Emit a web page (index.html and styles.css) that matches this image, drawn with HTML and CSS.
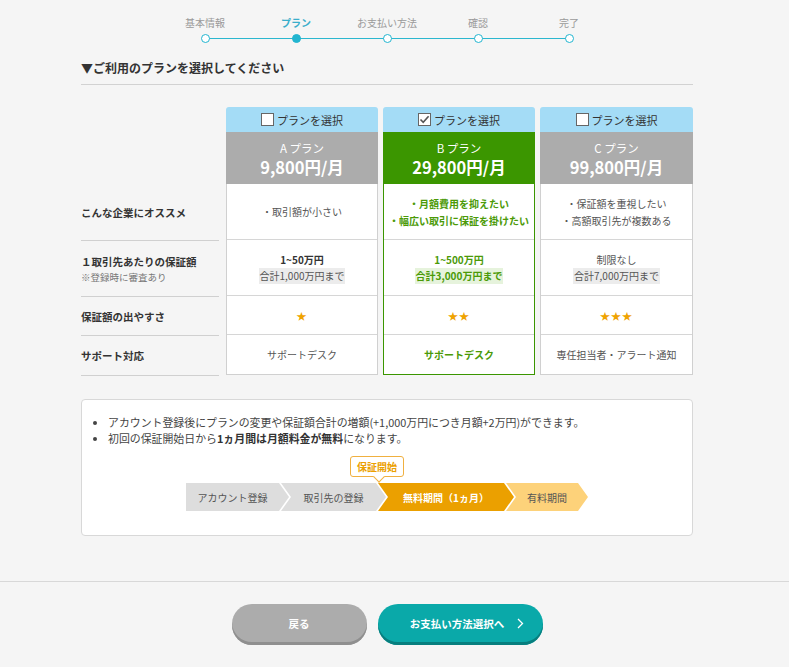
FILE: index.html
```html
<!DOCTYPE html>
<html lang="ja">
<head>
<meta charset="utf-8">
<title>プラン選択</title>
<link rel="stylesheet" href="styles.css">
</head>
<body>
<div class="frame">
  <div class="wrap">
    <ol class="stepper">
      <li class="step"><span class="step-label">基本情報</span><span class="dot"></span></li>
      <li class="step active"><span class="step-label">プラン</span><span class="dot"></span></li>
      <li class="step"><span class="step-label">お支払い方法</span><span class="dot"></span></li>
      <li class="step"><span class="step-label">確認</span><span class="dot"></span></li>
      <li class="step"><span class="step-label">完了</span><span class="dot"></span></li>
    </ol>

    <h2 class="heading">▼ご利用のプランを選択してください</h2>

    <div class="plans">
      <div class="labels">
        <div class="labels-head"></div>
        <div class="lrow r1"><span class="lt">こんな企業にオススメ</span></div>
        <div class="lrow r2"><span class="lt">１取引先あたりの保証額</span><span class="ln">※登録時に審査あり</span></div>
        <div class="lrow r3"><span class="lt">保証額の出やすさ</span></div>
        <div class="lrow r4"><span class="lt">サポート対応</span></div>
      </div>

      <div class="plan">
        <div class="plan-select"><span class="cb"></span>プランを選択</div>
        <div class="plan-price"><span class="pname">A プラン</span><span class="pval">9,800円/月</span></div>
        <div class="plan-body">
          <div class="cell r1">・取引額が小さい</div>
          <div class="cell r2"><b class="amt">1~50万円</b><span class="total">合計1,000万円まで</span></div>
          <div class="cell r3"><span class="stars">★</span></div>
          <div class="cell r4">サポートデスク</div>
        </div>
      </div>

      <div class="plan selected">
        <div class="plan-select"><span class="cb checked"><svg width="11" height="11" viewBox="0 0 11 11"><polyline points="1.5,5.5 4.2,8.3 9.6,2.2" fill="none" stroke="#555" stroke-width="1.6"/></svg></span>プランを選択</div>
        <div class="plan-price"><span class="pname">B プラン</span><span class="pval">29,800円/月</span></div>
        <div class="plan-body">
          <div class="cell r1"><span>・月額費用を抑えたい</span><span>・幅広い取引に保証を掛けたい</span></div>
          <div class="cell r2"><b class="amt">1~500万円</b><span class="total">合計3,000万円まで</span></div>
          <div class="cell r3"><span class="stars">★★</span></div>
          <div class="cell r4">サポートデスク</div>
        </div>
      </div>

      <div class="plan">
        <div class="plan-select"><span class="cb"></span>プランを選択</div>
        <div class="plan-price"><span class="pname">C プラン</span><span class="pval">99,800円/月</span></div>
        <div class="plan-body">
          <div class="cell r1"><span>・保証額を重視したい</span><span>・高額取引先が複数ある</span></div>
          <div class="cell r2"><span class="amt plain">制限なし</span><span class="total">合計7,000万円まで</span></div>
          <div class="cell r3"><span class="stars">★★★</span></div>
          <div class="cell r4">専任担当者・アラート通知</div>
        </div>
      </div>
    </div>

    <div class="notes">
      <ul class="note-list">
        <li>アカウント登録後にプランの変更や保証額合計の増額(+1,000万円につき月額+2万円)ができます。</li>
        <li>初回の保証開始日から<b>1ヵ月間は月額料金が無料</b>になります。</li>
      </ul>
      <div class="flow">
        <div class="flow-tagrow"><span class="flow-tag">保証開始</span></div>
        <div class="flow-steps">
          <div class="seg seg1">アカウント登録</div>
          <div class="seg seg2">取引先の登録</div>
          <div class="seg seg3">無料期間（1ヵ月）</div>
          <div class="seg seg4">有料期間</div>
        </div>
      </div>
    </div>
  </div>
</div>

<div class="footer">
  <div class="frame">
    <div class="buttons">
      <a class="btn btn-back" href="#">戻る</a>
      <a class="btn btn-next" href="#">お支払い方法選択へ<svg class="chev" width="7" height="11" viewBox="0 0 7 11"><polyline points="1,1 5.5,5.5 1,10" fill="none" stroke="#fff" stroke-width="1.3"/></svg></a>
    </div>
  </div>
</div>
</body>
</html>
```

FILE: styles.css
```css
* { box-sizing: border-box; }

html, body {
  margin: 0;
  padding: 0;
  background: #f5f5f5;
}

body {
  font-family: "Noto Sans CJK JP", "Noto Sans", sans-serif;
  color: #333;
  font-size: 11px;
}

.frame {
  width: 774px;
}

.wrap {
  width: 612px;
  margin: 0 auto;
}

/* Stepper */
.stepper {
  list-style: none;
  margin: 0 auto;
  padding: 16px 0 0;
  width: 455px;
  display: flex;
  position: relative;
}

.stepper::before {
  content: "";
  position: absolute;
  left: 45.5px;
  right: 45.5px;
  top: 37.5px;
  height: 1.2px;
  background: #2cb7cf;
}

.step {
  width: 91px;
  display: flex;
  flex-direction: column;
  align-items: center;
  position: relative;
}

.step-label {
  font-size: 10px;
  line-height: 14px;
  color: #9a9a9a;
  white-space: nowrap;
}

.step.active .step-label {
  color: #3aaecb;
  font-weight: bold;
}

.dot {
  margin-top: 4px;
  width: 9px;
  height: 9px;
  border-radius: 50%;
  border: 1.5px solid #22b5d0;
  background: #fff;
  position: relative;
}

.step.active .dot {
  background: #22b5d0;
}

/* Heading */
.heading {
  margin: 16px 0 0;
  padding: 0 0 7px;
  font-size: 12px;
  line-height: 18px;
  font-weight: bold;
  color: #333;
  border-bottom: 1px solid #d2d2d2;
}

/* Plans grid */
.plans {
  margin-top: 22px;
  display: grid;
  grid-template-columns: 140px 152px 152px 153px;
  column-gap: 5px;
}

.labels {
  margin-right: 2px;
  display: flex;
  flex-direction: column;
}

.labels-head { height: 77px; }

.r1 { height: 57px; }
.r2 { height: 56px; }
.r3 { height: 39px; }
.r4 { height: 40px; }

.lrow {
  display: flex;
  flex-direction: column;
  justify-content: center;
  border-bottom: 1px solid #d0d0d0;
}

.lt {
  font-size: 10.5px;
  font-weight: bold;
  color: #333;
  line-height: 17px;
}

.ln {
  font-size: 9.5px;
  color: #777;
  line-height: 14px;
}

.plan {
  display: flex;
  flex-direction: column;
}

.plan-select {
  height: 25px;
  background: #a4dcf6;
  border-radius: 3px 3px 0 0;
  display: flex;
  align-items: center;
  justify-content: center;
  gap: 3px;
  font-size: 11px;
  color: #333;
}

.cb {
  width: 13px;
  height: 13px;
  background: #fff;
  border: 1px solid #666;
  display: inline-flex;
  align-items: center;
  justify-content: center;
}

.plan-price {
  height: 52px;
  background: #acacac;
  color: #fff;
  display: flex;
  flex-direction: column;
  align-items: center;
  padding-top: 8px;
}

.pname {
  font-size: 11.5px;
  line-height: 16px;
}

.pval {
  font-size: 16.5px;
  line-height: 22px;
  font-weight: bold;
}

.plan.selected .plan-price {
  background: #3b9600;
}

.plan-body {
  background: #fff;
  border: 1px solid #d0d0d0;
  border-top: none;
  display: flex;
  flex-direction: column;
}

.plan.selected .plan-body {
  border-color: #3b9600;
}

.cell {
  display: flex;
  flex-direction: column;
  align-items: center;
  justify-content: center;
  text-align: center;
  font-size: 10px;
  line-height: 17px;
  color: #555;
  border-bottom: 1px solid #d6d6d6;
}

.cell.r1 { height: 56px; }
.cell.r4 { border-bottom: none; height: 39px; }

.amt {
  font-size: 10px;
  font-weight: bold;
  color: #333;
}

.amt.plain {
  font-weight: normal;
  color: #555;
}

.total {
  background: #ececec;
  color: #555;
  padding: 0 1px;
  line-height: 16px;
}

.stars {
  color: #efa300;
  font-size: 10px;
  letter-spacing: 1px;
}

.plan.selected .cell {
  color: #4b9a07;
  font-weight: bold;
}

.plan.selected .amt { color: #4b9a07; }

.plan.selected .total {
  background: #e6f3dc;
  color: #4b9a07;
}

.plan.selected .stars { font-weight: normal; color: #efa300; }

/* Notes */
.notes {
  margin-top: 23px;
  background: #fff;
  border: 1px solid #d8d8d8;
  border-radius: 4px;
  padding: 14px 0 24px;
}

.note-list {
  margin: 0;
  padding: 0 0 0 26px;
  font-size: 10.9px;
  line-height: 16px;
  color: #444;
}

.note-list b { font-weight: bold; color: #333; }

.flow {
  margin-top: 10px;
  display: flex;
  flex-direction: column;
  align-items: center;
}

.flow-tagrow {
  width: 402px;
  padding-left: 164px;
  height: 27px;
}

.flow-tag {
  display: inline-block;
  position: relative;
  width: 54px;
  height: 21px;
  border: 1px solid #f0b040;
  border-radius: 3px;
  background: #fff;
  color: #eba000;
  font-weight: bold;
  font-size: 10px;
  line-height: 19px;
  text-align: center;
}

.flow-tag::after {
  content: "";
  position: absolute;
  left: 24px;
  bottom: -5px;
  width: 7px;
  height: 7px;
  background: #fff;
  border-right: 1px solid #f0b040;
  border-bottom: 1px solid #f0b040;
  transform: rotate(45deg);
}

.flow-steps {
  display: flex;
  height: 28px;
}

.seg {
  height: 28px;
  display: flex;
  align-items: center;
  justify-content: center;
  font-size: 10px;
  color: #555;
  padding: 0 10px 0 10px;
  margin-left: -8px;
  clip-path: polygon(0 0, calc(100% - 10px) 0, 100% 50%, calc(100% - 10px) 100%, 0 100%, 10px 50%);
}

.seg1 {
  margin-left: 0;
  width: 103px;
  padding-left: 0;
  background: #dddddd;
  clip-path: polygon(0 0, calc(100% - 10px) 0, 100% 50%, calc(100% - 10px) 100%, 0 100%);
}

.seg2 { width: 105px; background: #dddddd; }

.seg3 {
  width: 136px;
  background: #eba000;
  color: #fff;
  font-weight: bold;
}

.seg4 { width: 82px; background: #fdd27a; }

/* Footer */
.footer {
  margin-top: 45px;
  border-top: 1px solid #d8d8d8;
  padding-top: 22px;
  padding-bottom: 22px;
}

.buttons {
  display: flex;
  justify-content: center;
  gap: 11px;
}

.btn {
  height: 41px;
  border-radius: 20px;
  display: flex;
  align-items: center;
  justify-content: center;
  padding-bottom: 3px;
  color: #fff;
  font-weight: bold;
  font-size: 10.5px;
  text-decoration: none;
}

.btn-back {
  width: 135px;
  background: #acacac;
  box-shadow: inset 0 -3px 0 #8f8f8f;
}

.btn-next {
  width: 165px;
  background: #0aa9a9;
  box-shadow: inset 0 -3px 0 #077e7e;
  padding-left: 14px;
}

.chev { margin-left: 13px; }
```
